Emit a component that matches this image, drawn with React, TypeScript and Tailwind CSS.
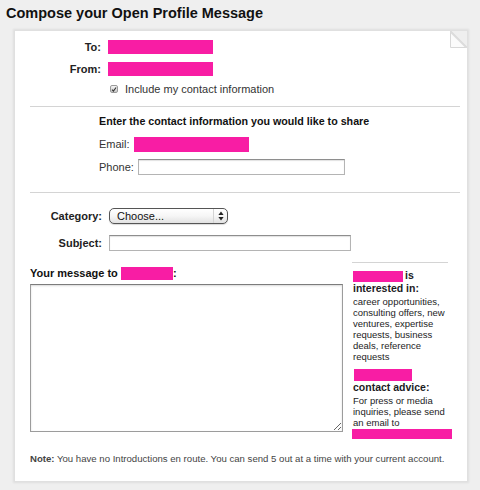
import type { ReactNode } from "react";

const pink = "bg-[#f81da4]";

function Label({ children, width }: { children: ReactNode; width: string }) {
  return (
    <span className={`${width} shrink-0 text-right text-[11px] font-bold text-[#222]`}>
      {children}
    </span>
  );
}

function TextBox({ width }: { width: string }) {
  return (
    <input
      type="text"
      className={`${width} h-[16px] border border-[#b4b4b4] border-t-[#8e8e8e] bg-white shadow-[inset_0_1px_1px_rgba(0,0,0,0.12)] outline-none`}
    />
  );
}

function CheckBox() {
  return (
    <span className="flex h-[8px] w-[8px] items-center justify-center rounded-[2px] border border-[#9a9a9a] bg-gradient-to-b from-[#f4f4f4] to-[#c9c9c9]">
      <svg width="7" height="7" viewBox="0 0 7 7" fill="none">
        <path d="M1.2 3.6 L2.8 5.3 L5.9 1.2" stroke="#333" strokeWidth="1.3" />
      </svg>
    </span>
  );
}

function Select() {
  return (
    <div className="flex h-[16px] w-[119px] items-center rounded-[5px] border border-[#555] bg-gradient-to-b from-white via-[#f6f6f6] to-[#e2e2e2] shadow-[0_1px_1px_rgba(0,0,0,0.15)]">
      <span className="flex-1 pl-[7px] text-[11px] leading-none text-[#111]">Choose...</span>
      <span className="flex h-full w-[14px] items-center justify-center border-l border-[#d4d4d4]">
        <svg width="6" height="10" viewBox="0 0 6 10">
          <path d="M3 0.5 L5.6 4 L0.4 4 Z" fill="#222" />
          <path d="M3 9.5 L5.6 6 L0.4 6 Z" fill="#222" />
        </svg>
      </span>
    </div>
  );
}

function Corner() {
  return (
    <svg className="absolute right-0 top-0" width="17" height="17" viewBox="0 0 17 17">
      <polygon points="0,0 17,0 17,17" fill="#efefef" />
      <polygon points="0.5,0 0.5,16.5 17,16.5" fill="#fbfbfb" stroke="#d8d8d8" strokeWidth="1" />
      <line x1="0" y1="0" x2="17" y2="17" stroke="#dcdcdc" strokeWidth="2" />
    </svg>
  );
}

export default function App() {
  return (
    <div className="min-h-screen bg-[#efefef] pb-[9px] font-['Liberation_Sans',Arial,sans-serif] text-[#222]">
      <h1 className="px-[6px] pt-[3px] text-[14.5px] font-bold leading-[20px] text-[#111]">
        Compose your Open Profile Message
      </h1>

      <div className="relative ml-[15px] mt-[8px] w-[452px] bg-white pb-[16px] pt-[9px] shadow-[0_0_2px_2px_rgba(0,0,0,0.07)]">
        <Corner />

        {/* sender and recipient */}
        <div className="flex h-[14px] items-center gap-[7px]">
          <Label width="w-[86px]">To:</Label>
          <span className={`h-[14px] w-[105px] ${pink}`} />
        </div>
        <div className="mt-[8px] flex h-[14px] items-center gap-[7px]">
          <Label width="w-[86px]">From:</Label>
          <span className={`h-[14px] w-[105px] ${pink}`} />
        </div>
        <div className="mt-[6px] flex h-[14px] items-center pl-[95px]">
          <CheckBox />
          <span className="ml-[7px] text-[11px] text-[#333]">Include my contact information</span>
        </div>

        <div className="ml-[15px] mr-[7px] mt-[10px] h-px bg-[#d4d4d4]" />

        {/* contact information */}
        <div className="pl-[84px]">
          <p className="mt-[7px] text-[10.7px] font-bold leading-[14px] text-[#111]">
            Enter the contact information you would like to share
          </p>
          <div className="mt-[9px] flex h-[15px] items-center gap-[4px]">
            <span className="text-[11px] text-[#333]">Email:</span>
            <span className={`h-[15px] w-[115px] ${pink}`} />
          </div>
          <div className="mt-[7px] flex h-[16px] items-center gap-[4px]">
            <span className="text-[11px] text-[#333]">Phone:</span>
            <TextBox width="w-[207px]" />
          </div>
        </div>

        <div className="ml-[15px] mr-[7px] mt-[17px] h-px bg-[#d4d4d4]" />

        {/* category and subject */}
        <div className="mt-[15px] flex h-[16px] items-center gap-[7px]">
          <Label width="w-[87px]">Category:</Label>
          <Select />
        </div>
        <div className="mt-[11px] flex h-[16px] items-center gap-[7px]">
          <Label width="w-[87px]">Subject:</Label>
          <TextBox width="w-[242px]" />
        </div>

        {/* message and sidebar */}
        <div className="mt-[11px] flex items-start">
          <div className="ml-[15px] w-[313px]">
            <div className="mt-[4px] flex h-[14px] items-center text-[11px] font-bold text-[#111]">
              Your message to&nbsp;
              <span className={`h-[13px] w-[52px] ${pink}`} />:
            </div>
            <textarea className="mt-[4px] block h-[148px] w-[313px] border border-[#9c9c9c] border-t-[#7c7c7c] bg-white shadow-[inset_0_1px_2px_rgba(0,0,0,0.15)] outline-none" />
          </div>

          <div className="ml-[9px] w-[100px] text-[#1c1c24]">
            <div className="w-[96px] h-px bg-[#d4d4d4]" />
            <div className="mt-[7px] flex h-[12px] items-center pl-[1px] text-[10.5px] font-bold">
              <span className={`h-[11px] w-[50px] ${pink}`} />
              <span className="ml-[2px]">is</span>
            </div>
            <div className="pl-[1px] text-[10.5px] font-bold leading-[12px]">interested in:</div>
            <div className="mt-[2px] pl-[1px] text-[9.5px] leading-[11px]">
              <div>career opportunities,</div>
              <div>consulting offers, new</div>
              <div>ventures, expertise</div>
              <div>requests, business</div>
              <div>deals, reference</div>
              <div>requests</div>
            </div>
            <div className="mt-[7px] flex h-[12px] items-center pl-[2px]">
              <span className={`h-[12px] w-[58px] ${pink}`} />
            </div>
            <div className="pl-[1px] text-[10.5px] font-bold leading-[12px]">contact advice:</div>
            <div className="mt-[2px] pl-[1px] text-[9.5px] leading-[11px]">
              <div>For press or media</div>
              <div>inquiries, please send</div>
              <div>an email to</div>
            </div>
            <span className={`mt-[1px] block h-[10px] w-[100px] ${pink}`} />
          </div>
        </div>

        <p className="ml-[15px] mt-[14px] text-[9.6px] leading-[12px] text-[#444]">
          <span className="font-bold">Note:</span> You have no Introductions en route. You can send 5 out at a time with your current account.
        </p>
      </div>
    </div>
  );
}
